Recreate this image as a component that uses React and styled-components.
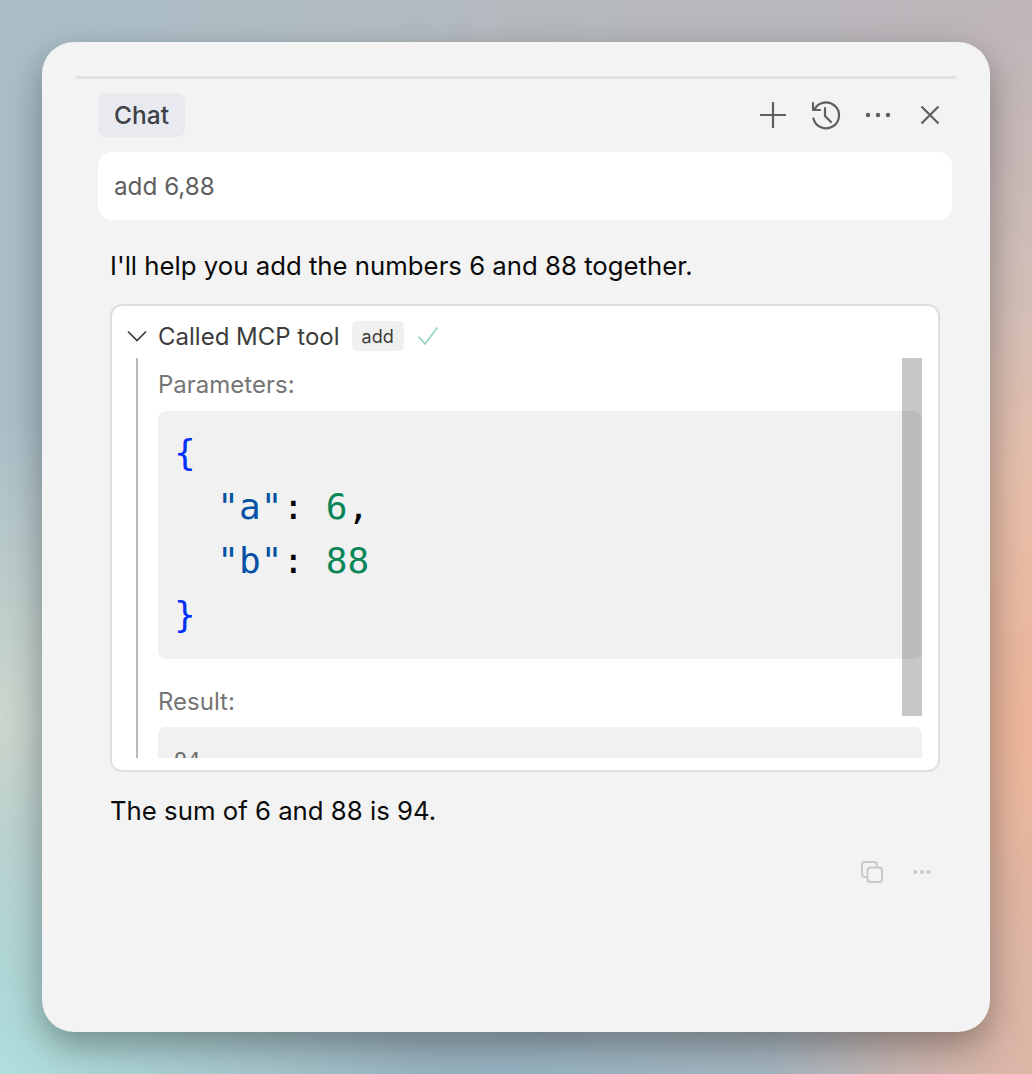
import React from "react";
import styled, { createGlobalStyle } from "styled-components";

const GlobalStyle = createGlobalStyle`
  html, body {
    margin: 0;
    padding: 0;
  }
  body {
    font-family: Inter, "Liberation Sans", sans-serif;
    -webkit-font-smoothing: antialiased;
  }
`;

const Page = styled.div`
  width: 1032px;
  height: 1074px;
  box-sizing: border-box;
  padding: 42px;
  overflow: hidden;
  background:
    radial-gradient(300px 420px at 1032px 730px, #edb598 0%, rgba(237, 181, 152, 0) 100%),
    radial-gradient(260px 300px at 1032px 1074px, #d9b6aa 0%, rgba(217, 182, 170, 0) 100%),
    radial-gradient(240px 560px at 1032px 540px, #e4c6b6 0%, rgba(228, 198, 182, 0) 100%),
    radial-gradient(420px 330px at 0 1074px, #b0dfdc 0%, rgba(176, 223, 220, 0) 100%),
    radial-gradient(170px 300px at 0 720px, #ccd7cd 0%, rgba(204, 215, 205, 0) 100%),
    radial-gradient(620px 120px at 500px 1074px, #96b4c2 0%, rgba(150, 180, 194, 0) 100%),
    linear-gradient(90deg, #aabfc8 0%, #b5babf 50%, #bdb5b9 100%);
`;

const Card = styled.div`
  width: 948px;
  height: 990px;
  box-sizing: border-box;
  padding: 34px 34px 0;
  background: #f3f3f3;
  border-radius: 32px;
  box-shadow: 0 14px 36px rgba(0, 0, 0, 0.34);
`;

const Divider = styled.div`
  height: 3px;
  background: #e0e0e0;
`;

const Header = styled.div`
  display: flex;
  align-items: center;
  justify-content: space-between;
  height: 44px;
  margin: 14px 0 15px 22px;
`;

const Tab = styled.div`
  height: 44px;
  width: 87px;
  display: flex;
  align-items: center;
  justify-content: center;
  background: #e8eaf0;
  border-radius: 8px;
  color: #3e4148;
  font-size: 24.5px;
  font-weight: 500;
`;

const Actions = styled.div`
  display: flex;
  align-items: center;
`;

const IconSlot = styled.div`
  width: 52px;
  height: 44px;
  display: flex;
  align-items: center;
  justify-content: center;
  color: #5f5f5f;
`;

const UserMessage = styled.div`
  height: 68px;
  margin: 0 4px 0 22px;
  padding: 0 16px;
  display: flex;
  align-items: center;
  background: #fff;
  border-radius: 14px;
  color: #5f5f5f;
  font-size: 24.25px;
`;

const Conversation = styled.div`
  margin: 0 16px 0 34px;
`;

const Paragraph = styled.p`
  margin: ${(p) => p.$top}px 0 0;
  color: #0a0a0a;
  font-size: 25.75px;
  line-height: 34px;
`;

const ToolBox = styled.div`
  height: 468px;
  margin-top: 21px;
  box-sizing: border-box;
  padding: 15px 16px 0 15px;
  background: #fff;
  border: 2px solid #dedede;
  border-radius: 12px;
`;

const ToolHeader = styled.div`
  display: flex;
  align-items: center;
  height: 30px;
  color: #3c3c3c;
  font-size: 24px;
`;

const Chevron = styled.svg`
  width: 20px;
  height: 12px;
  margin-right: 11px;
  color: #3c3c3c;
`;

const Badge = styled.span`
  height: 30px;
  margin-left: 12px;
  padding: 0 10px;
  display: flex;
  align-items: center;
  background: #f0f0f0;
  border-radius: 5px;
  color: #3c3c3c;
  font-size: 18px;
`;

const Check = styled.svg`
  width: 22px;
  height: 20px;
  margin-left: 13px;
  color: #8fd3b4;
`;

const ToolBody = styled.div`
  position: relative;
  height: 400px;
  margin: 7px 0 0 9px;
  padding-left: 20px;
  border-left: 2px solid #b9b9b9;
  overflow: hidden;
`;

const Scrollbar = styled.div`
  position: absolute;
  top: 0;
  right: 0;
  width: 20px;
  height: 358px;
  background: rgba(0, 0, 0, 0.22);
`;

const Label = styled.div`
  margin-top: ${(p) => p.$top}px;
  height: 30px;
  line-height: 30px;
  color: #757575;
  font-size: 24px;
`;

const CodeBlock = styled.pre`
  margin: ${(p) => p.$top}px 0 0;
  padding: ${(p) => p.$pad};
  background: #f1f1f1;
  border-radius: 8px;
  font-family: "DejaVu Sans Mono", "Liberation Mono", monospace;
  font-size: ${(p) => p.$size}px;
  line-height: ${(p) => p.$line}px;
  color: #000;
`;

const Brace = styled.span`
  color: #0431fa;
`;

const Key = styled.span`
  color: #0451a5;
`;

const Num = styled.span`
  color: #098658;
`;

const Plain = styled.span`
  color: #6e6e6e;
`;

const Footer = styled.div`
  display: flex;
  justify-content: flex-end;
  align-items: center;
  gap: 30px;
  margin: 33px 9px 0 0;
  color: #c9c9c9;
`;

export default function App() {
  return (
    <Page>
      <GlobalStyle />
      <Card>
        <Divider />
        <Header>
          <Tab>Chat</Tab>
          <Actions>
            <IconSlot>
              <svg width="28" height="28" viewBox="0 0 28 28" fill="none" stroke="currentColor" strokeWidth="2.2">
                <path d="M13 1v26M0 14h26" />
              </svg>
            </IconSlot>
            <IconSlot>
              <svg width="30" height="30" viewBox="0 0 30 30" fill="none" stroke="currentColor" strokeWidth="2.2" strokeLinecap="round" strokeLinejoin="round">
                <path d="M3.4 9.5A13 13 0 1 1 2.4 18.5" />
                <path d="M2 3v7h7" />
                <path d="M14 8v8l6 6" />
              </svg>
            </IconSlot>
            <IconSlot>
              <svg width="26" height="6" viewBox="0 0 26 6" fill="currentColor">
                <circle cx="3" cy="3" r="2.2" />
                <circle cx="13" cy="3" r="2.2" />
                <circle cx="23" cy="3" r="2.2" />
              </svg>
            </IconSlot>
            <IconSlot>
              <svg width="20" height="20" viewBox="0 0 20 20" fill="none" stroke="currentColor" strokeWidth="2.2">
                <path d="M1.5 1.5l17 17M18.5 1.5l-17 17" />
              </svg>
            </IconSlot>
          </Actions>
        </Header>
        <UserMessage>add 6,88</UserMessage>
        <Conversation>
          <Paragraph $top={29}>I'll help you add the numbers 6 and 88 together.</Paragraph>
          <ToolBox>
            <ToolHeader>
              <Chevron viewBox="0 0 20 12" fill="none" stroke="currentColor" strokeWidth="1.7">
                <path d="M1 1.5l9 9 9-9" />
              </Chevron>
              Called MCP tool
              <Badge>add</Badge>
              <Check viewBox="0 0 22 20" fill="none" stroke="currentColor" strokeWidth="1.5">
                <path d="M1.5 10.5l6.5 7.5L20.5 1.5" />
              </Check>
            </ToolHeader>
            <ToolBody>
              <Label $top={12}>Parameters:</Label>
              <CodeBlock $top={11} $pad="15px 16px 17px" $size={36} $line={54}>
                <Brace>{"{"}</Brace>
                {"\n  "}
                <Key>"a"</Key>
                {": "}
                <Num>6</Num>
                {",\n  "}
                <Key>"b"</Key>
                {": "}
                <Num>88</Num>
                {"\n"}
                <Brace>{"}"}</Brace>
              </CodeBlock>
              <Label $top={28}>Result:</Label>
              <CodeBlock $top={10} $pad="19px 16px 16px" $size={22} $line={30}>
                <Plain>94</Plain>
              </CodeBlock>
              <Scrollbar />
            </ToolBody>
          </ToolBox>
          <Paragraph $top={22}>The sum of 6 and 88 is 94.</Paragraph>
          <Footer>
            <svg width="22" height="22" viewBox="0 0 22 22" fill="none" stroke="currentColor" strokeWidth="2">
              <rect x="6.5" y="6.5" width="14.5" height="14.5" rx="3" />
              <path d="M6.5 16H4a3 3 0 0 1-3-3V4a3 3 0 0 1 3-3h9a3 3 0 0 1 3 3v2.5" />
            </svg>
            <svg width="18" height="6" viewBox="0 0 18 6" fill="currentColor">
              <circle cx="2.5" cy="3" r="2" />
              <circle cx="9" cy="3" r="2" />
              <circle cx="15.5" cy="3" r="2" />
            </svg>
          </Footer>
        </Conversation>
      </Card>
    </Page>
  );
}
